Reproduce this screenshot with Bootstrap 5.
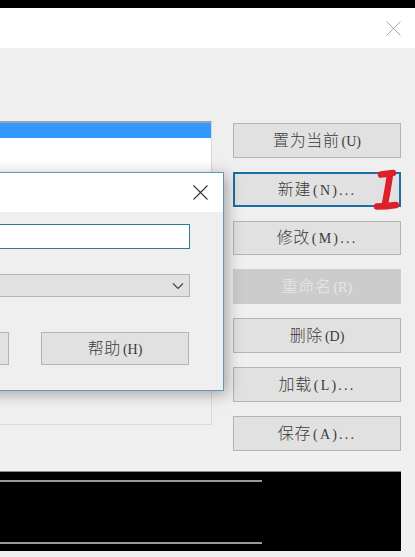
<!doctype html>
<html lang="zh">
<head>
<meta charset="utf-8">
<title>Dialog</title>
<link href="https://cdn.jsdelivr.net/npm/bootstrap@5.3.0/dist/css/bootstrap.min.css" rel="stylesheet">
<style>
html,body{height:100%;overflow:hidden}
body{font-family:"Noto Sans CJK SC","Liberation Sans",sans-serif;background:#f0f0f0;color:#333}
.page{height:557px;position:relative;overflow:hidden}
.topline{height:8px;background:#000}
.titlearea{height:40px;background:#fff;padding-right:14px}
.workarea{padding:73px 14px 0 0;background:#efefef}
.listpanel{width:212px;height:304px;border:1px solid #d9d9d9;border-top:2px solid #9aa3a8;border-left:0;background:#f0f0f0}
.listbox{height:66px;background:#fff;padding-top:0}
.listsel{height:15px;background:#3399ff}
.btncol{width:168px;margin-top:2px;gap:14px}
.winbtn{height:34.8px;padding:0;border-radius:0;background:#e1e1e1;border:1px solid #b4b4b4;color:#3a3a3a;font-size:16px;line-height:28px;text-align:center;font-weight:300;letter-spacing:.6px}
.winbtn:hover{background:#e1e1e1;border-color:#b4b4b4;color:#3a3a3a}
.winbtn.is-focus{border:2px solid #1c6ea4;line-height:25px}
.winbtn.btn:disabled{background:#ccc;border-color:#ccc;color:#e8e8e8;opacity:1}
.latin{font-family:"Liberation Serif",serif;font-size:14px;letter-spacing:0;margin-left:2px;font-weight:400}
.latin.wide{letter-spacing:2.2px}
.preview{height:80px;margin:20px 14px 0 0;background:#000;border-top:1px solid #888;padding:8px 0 7px}
.previewline{width:262px;height:2px;background:#999}
.dialogbox{position:absolute;left:-20px;top:172px;width:244px;height:219px;background:#efefef;border:1px solid #5f9bb0;box-shadow:3px 3px 14px rgba(0,0,0,.32)}
.dialoghead{height:39px;background:#fff;padding-right:15px}
.dialogbody{padding:12px 33px 0 0}
.dialoginput.form-control{height:25px;border-radius:0;border:1px solid #2b7a9c;padding:0;background:#fff}
.dialogselect{height:23px;margin-top:25px;background:#e1e1e1;border:1px solid #b4b4b4;padding-right:5px}
.dialogbtns{margin-top:35px;gap:32px}
.dialogbtns .winbtn{height:33px;line-height:25px}
.leftbtn{width:28px}
.helpbtn{width:148px}
.redmark{position:absolute;left:372px;top:168px;width:28px;height:42px}
</style>
</head>
<body>
<div class="page d-flex flex-column">
  <div class="topline"></div>
  <div class="titlearea d-flex align-items-center justify-content-end">
    <svg width="15" height="15" viewBox="0 0 15 15"><path d="M.5.5l14 14M14.5.5l-14 14" stroke="#a5a5a5" stroke-width="1" fill="none"/></svg>
  </div>
  <div class="workarea d-flex justify-content-between">
    <div class="listpanel">
      <div class="listbox"><div class="listsel"></div></div>
    </div>
    <div class="btncol d-flex flex-column">
      <button class="btn winbtn">置为当前<span class="latin">(U)</span></button>
      <button class="btn winbtn is-focus">新建<span class="latin wide">(N)...</span></button>
      <button class="btn winbtn">修改<span class="latin wide">(M)...</span></button>
      <button class="btn winbtn" disabled>重命名<span class="latin">(R)</span></button>
      <button class="btn winbtn">删除<span class="latin">(D)</span></button>
      <button class="btn winbtn">加载<span class="latin wide">(L)...</span></button>
      <button class="btn winbtn">保存<span class="latin wide">(A)...</span></button>
    </div>
  </div>
  <div class="preview d-flex flex-column justify-content-between">
    <div class="previewline"></div>
    <div class="previewline"></div>
  </div>

  <div class="dialogbox">
    <div class="dialoghead d-flex align-items-center justify-content-end">
      <svg width="15" height="15" viewBox="0 0 15 15"><path d="M.5.5l14 14M14.5.5l-14 14" stroke="#333" stroke-width="1.1" fill="none"/></svg>
    </div>
    <div class="dialogbody">
      <input class="form-control dialoginput" type="text" aria-label="name">
      <div class="dialogselect d-flex align-items-center justify-content-end">
        <svg width="12" height="8" viewBox="0 0 12 8"><path d="M1 1.500l5 5 5-5" stroke="#444" stroke-width="1.2" fill="none"/></svg>
      </div>
      <div class="dialogbtns d-flex">
        <button class="btn winbtn leftbtn" aria-label="cancel"></button>
        <button class="btn winbtn helpbtn">帮助<span class="latin">(H)</span></button>
      </div>
    </div>
  </div>

  <svg class="redmark" viewBox="0 0 28 42"><path d="M9 6.500C13 6 17 5.500 21 5M18 6C17 15 15 25 13 36M5 38.500C10 38.500 18 38 24 37" stroke="#dc1f2a" stroke-width="6.500" stroke-linecap="round" fill="none"/></svg>
</div>
</body>
</html>
